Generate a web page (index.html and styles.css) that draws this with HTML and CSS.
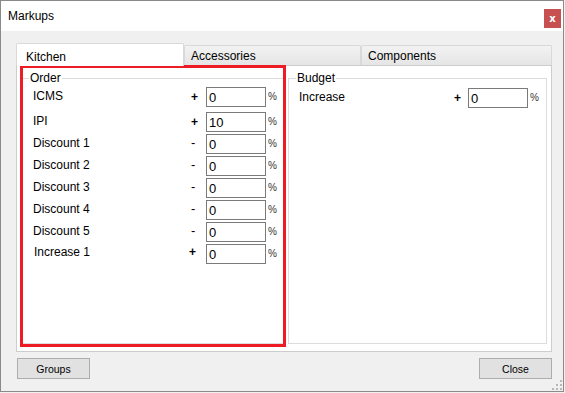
FILE: index.html
```html
<!DOCTYPE html>
<html lang="en">
  <head>
    <meta charset="UTF-8" />
    <title>Markups</title>
    <link rel="stylesheet" href="styles.css">
  </head>
  <body>
    <div class="window">
      <div class="titlebar">
        <span class="title">Markups</span>
        <button class="btn-x">x</button>
      </div>

      <div class="client">
        <div class="tabs">
          <div class="tab tab-kitchen active">Kitchen</div>
          <div class="tab tab-acc">Accessories</div>
          <div class="tab tab-comp">Components</div>
        </div>

        <div class="panel">
          <fieldset class="group order">
            <legend>Order</legend>
            <div class="rows">
              <div class="row first">
                <span class="label">ICMS</span>
                <span class="sign">+</span>
                <input type="text" value="0" />
                <span class="pct">%</span>
              </div>
              <div class="row">
                <span class="label">IPI</span>
                <span class="sign">+</span>
                <input type="text" value="10" />
                <span class="pct">%</span>
              </div>
              <div class="row">
                <span class="label">Discount 1</span>
                <span class="sign minus">-</span>
                <input type="text" value="0" />
                <span class="pct">%</span>
              </div>
              <div class="row">
                <span class="label">Discount 2</span>
                <span class="sign minus">-</span>
                <input type="text" value="0" />
                <span class="pct">%</span>
              </div>
              <div class="row">
                <span class="label">Discount 3</span>
                <span class="sign minus">-</span>
                <input type="text" value="0" />
                <span class="pct">%</span>
              </div>
              <div class="row">
                <span class="label">Discount 4</span>
                <span class="sign minus">-</span>
                <input type="text" value="0" />
                <span class="pct">%</span>
              </div>
              <div class="row">
                <span class="label">Discount 5</span>
                <span class="sign minus">-</span>
                <input type="text" value="0" />
                <span class="pct">%</span>
              </div>
              <div class="row">
                <span class="label label-up">Increase 1</span>
                <span class="sign shift">+</span>
                <input type="text" value="0" />
                <span class="pct">%</span>
              </div>
            </div>
          </fieldset>

          <fieldset class="group budget">
            <legend>Budget</legend>
            <div class="rows">
              <div class="row">
                <span class="label">Increase</span>
                <span class="sign">+</span>
                <input type="text" value="0" />
                <span class="pct">%</span>
              </div>
            </div>
          </fieldset>

          <!-- highlight drawn over the Order group -->
          <div class="highlight"></div>
        </div>

        <div class="buttons">
          <button class="btn">Groups</button>
          <button class="btn">Close</button>
        </div>
      </div>

      <svg class="grip" width="10" height="10" viewBox="0 0 10 10">
        <rect x="8" y="0" width="2" height="2" fill="#b8b8b8" />
        <rect x="4" y="4" width="2" height="2" fill="#b8b8b8" />
        <rect x="8" y="4" width="2" height="2" fill="#b8b8b8" />
        <rect x="0" y="8" width="2" height="2" fill="#b8b8b8" />
        <rect x="4" y="8" width="2" height="2" fill="#b8b8b8" />
        <rect x="8" y="8" width="2" height="2" fill="#b8b8b8" />
      </svg>
    </div>
  </body>
</html>
```

FILE: styles.css
```css
body {
  margin: 0;
  padding: 0;
  background-color: #f0f0f0;
  font-family: "Liberation Sans", Arial, sans-serif;
  font-size: 12px;
  color: #000;
}
.window {
  position: relative;
  width: 564px;
  height: 392px;
  box-sizing: border-box;
  border: 1px solid #8a8a8a;
  background-color: #f0f0f0;
  display: flex;
  flex-direction: column;
}
.titlebar {
  height: 30px;
  background-color: #fff;
  display: flex;
  align-items: center;
  padding: 0 2px 0 7px;
}
.title {
  flex: 1;
  line-height: 14px;
}
.btn-x {
  align-self: flex-start;
  margin-top: 8px;
  width: 17px;
  height: 19px;
  padding: 0;
  border: none;
  background-color: #c75050;
  color: #fff;
  font-family: "DejaVu Sans", sans-serif;
  font-weight: bold;
  font-size: 10px;
  line-height: 17px;
}
.client {
  padding: 12px 0 0 15px;
}
.tabs {
  display: flex;
  height: 22px;
}
.tab {
  box-sizing: border-box;
  height: 20px;
  margin-top: 2px;
  padding: 1px 0 0 6px;
  line-height: 18px;
  border: 1px solid #d9d9d9;
  border-bottom: none;
  border-radius: 2px 2px 0 0;
  background: linear-gradient(#f2f2f2, #e5e5e5);
}
.tab.active {
  position: relative;
  z-index: 1;
  height: 23px;
  margin-top: 0;
  padding: 4px 0 0 9px;
  background: #fff;
}
.tab-kitchen {
  width: 168px;
}
.tab-acc {
  width: 177px;
}
.tab-comp {
  width: 191px;
}
.panel {
  position: relative;
  width: 536px;
  height: 287px;
  box-sizing: border-box;
  border: 1px solid #cdcdcd;
  background-color: #fff;
  display: flex;
  gap: 4px;
  padding: 5px 4px 7px 4px;
}
.group {
  margin: 0;
  padding: 0;
  min-width: 0;
  box-sizing: border-box;
  border: 1px solid #dcdcdc;
}
.group legend {
  margin-left: 7px;
  padding: 0 1px;
  line-height: 14px;
}
.order {
  width: 263px;
}
.budget {
  width: 259px;
}
.rows {
  padding: 2px 0 0 11px;
}
.budget .rows {
  padding: 3px 0 0 10px;
}
.row {
  display: grid;
  grid-template-columns: 158px 15px 60px auto;
  column-gap: 0;
  height: 22px;
}
.budget .row {
  grid-template-columns: 155px 14px 60px auto;
}
.row.first {
  margin-bottom: 3px;
}
.label {
  line-height: 18px;
  white-space: nowrap;
}
.label-up {
  line-height: 16px;
  padding-left: 1px;
}
.sign {
  font-weight: bold;
  line-height: 21px;
}
.sign.minus {
  font-weight: normal;
  font-size: 13px;
  line-height: 18px;
}
.sign.shift {
  margin-left: -2px;
  line-height: 17px;
}
input {
  width: 60px;
  height: 20px;
  box-sizing: border-box;
  margin: 0;
  padding: 0 2px;
  border: 1px solid #7a7a7a;
  background-color: #fff;
  font-family: "Liberation Sans", Arial, sans-serif;
  font-size: 13px;
  color: #000;
  outline: none;
}
.pct {
  padding-left: 2px;
  font-size: 10px;
  line-height: 19px;
  color: #333;
}
.highlight {
  position: absolute;
  left: 3px;
  top: -1px;
  width: 266px;
  height: 282px;
  box-sizing: border-box;
  border: 3px solid #ed1c24;
}
.buttons {
  width: 536px;
  display: flex;
  justify-content: space-between;
  margin-top: 6px;
}
.btn {
  width: 73px;
  height: 21px;
  margin: 0 0 0 1px;
  padding: 0;
  border: 1px solid #adadad;
  background-color: #e1e1e1;
  font-family: "Liberation Sans", Arial, sans-serif;
  font-size: 10.5px;
  color: #000;
}
.btn:last-child {
  margin-left: 0;
}
.grip {
  position: absolute;
  right: 1px;
  bottom: 1px;
}
```
